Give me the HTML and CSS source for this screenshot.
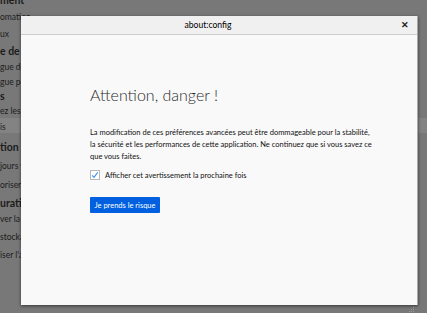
FILE: index.html
```html
<!DOCTYPE html>
<html lang="fr">
<head>
    <meta charset="UTF-8">
    <title>about:config</title>
    <link rel="stylesheet" href="styles.css">
</head>
<body>
    <div class="page-behind">
        <div class="row head r1">ment</div>
        <div class="row r2">omation</div>
        <div class="row r3">ux</div>
        <div class="row head r4">e de da</div>
        <div class="row r5">gue de</div>
        <div class="row r6">gue po</div>
        <div class="row head r7">s</div>
        <div class="row r8">ez les <span class="link">l</span></div>
        <div class="row selected r9">is</div>
        <div class="row head r10">tion s</div>
        <div class="row r11">jours v</div>
        <div class="row r12">oriser l</div>
        <div class="row head r13">uratio</div>
        <div class="row r14">ver la</div>
        <div class="row r15">stocka</div>
        <div class="row r16">iser l'a</div>
    </div>

    <div class="dialog">
        <div class="dialog-title">
            <span class="title-text">about:config</span>
            <span class="close-btn">&#x2715;</span>
        </div>
        <div class="dialog-body">
            <h1>Attention, danger !</h1>
            <p class="warning">La modification de ces préférences avancées peut être dommageable pour la stabilité, la sécurité et les performances de cette application. Ne continuez que si vous savez ce que vous faites.</p>
            <label class="check-row">
                <span class="checkbox">
                    <svg width="8" height="8" viewBox="0 0 8 8"><path d="M1.2 4.4 L3 6.4 L6.8 1.2" fill="none" stroke="#3b8fe6" stroke-width="1.1"/></svg>
                </span>
                Afficher cet avertissement la prochaine fois
            </label>
            <button class="accept-btn">Je prends le risque</button>
        </div>
        <div class="grip">
            <svg width="6" height="6" viewBox="0 0 6 6"><rect x="4" y="0" width="1" height="1" fill="#9a9a9a"/><rect x="2" y="2" width="1" height="1" fill="#9a9a9a"/><rect x="4" y="2" width="1" height="1" fill="#9a9a9a"/><rect x="0" y="4" width="1" height="1" fill="#9a9a9a"/><rect x="2" y="4" width="1" height="1" fill="#9a9a9a"/><rect x="4" y="4" width="1" height="1" fill="#9a9a9a"/></svg>
        </div>
    </div>
</body>
</html>
```

FILE: styles.css
```css
body {
    margin: 0;
    width: 427px;
    height: 313px;
    overflow: hidden;
    background-color: #787878;
    font-family: Lato, 'Open Sans', sans-serif;
    position: relative;
}

/* page derriere le voile */
.page-behind {
    display: flex;
    flex-direction: column;
    margin-top: -8px;
    color: #1c1c1c;
    font-size: 8.5px;
}

.row {
    display: flex;
    align-items: center;
    white-space: nowrap;
    overflow: hidden;
}

.head {
    font-size: 10.5px;
    font-weight: 700;
}

.link {
    color: #0a3a78;
}

.selected {
    background-color: #838383;
}

.r1 { height: 16px; }
.r2 { height: 17px; }
.r3 { height: 18px; }
.r4 { height: 16px; }
.r5 { height: 16px; }
.r6 { height: 13px; }
.r7 { height: 15px; }
.r8 { height: 15px; }
.r9 { height: 15px; padding-top: 3px; box-sizing: border-box; }
.r10 { height: 21px; margin-top: 3px; }
.r11 { height: 18px; }
.r12 { height: 20px; }
.r13 { height: 16px; }
.r14 { height: 16px; }
.r15 { height: 20px; }
.r16 { height: 16px; }

/* fenetre de dialogue */
.dialog {
    position: absolute;
    left: 21px;
    top: 16px;
    width: 397px;
    height: 289px;
    box-sizing: border-box;
    background-color: #f9f9f9;
    border-right: 1px solid #a8a8a8;
    box-shadow: 0 1px 3px rgba(0, 0, 0, 0.55);
    display: flex;
    flex-direction: column;
}

.dialog-title {
    height: 18px;
    flex-shrink: 0;
    background-color: #f0f0f0;
    border-bottom: 1px solid #cdcdcd;
    display: flex;
    align-items: center;
    justify-content: center;
    position: relative;
    font-size: 8.6px;
    color: #000;
}

.title-text {
    margin-left: -22px;
}

.close-btn {
    position: absolute;
    right: 8px;
    top: 3px;
    font-size: 9px;
    font-weight: 700;
    color: #222;
}

.dialog-body {
    padding: 48px 0 0 69px;
}

h1 {
    margin: 0;
    font-size: 16px;
    line-height: 24px;
    font-weight: 300;
    color: #2a2a2a;
}

.warning {
    margin: 20px 0 0 0;
    width: 287px;
    font-size: 7.5px;
    line-height: 12px;
    color: #111;
}

.check-row {
    margin-top: 6px;
    display: flex;
    align-items: center;
    height: 12px;
    font-size: 7.5px;
    color: #111;
}

.checkbox {
    width: 10px;
    height: 10px;
    box-sizing: border-box;
    border: 1px solid #b8b8b8;
    background-color: #fff;
    margin-right: 5px;
    display: flex;
    align-items: center;
    justify-content: center;
}

.accept-btn {
    margin-top: 16px;
    width: 70px;
    height: 16px;
    padding: 0;
    border: none;
    border-radius: 1px;
    background-color: #0060df;
    color: #fff;
    font-family: Lato, 'Open Sans', sans-serif;
    font-size: 7.5px;
    white-space: nowrap;
}

.grip {
    position: absolute;
    right: 2px;
    bottom: 2px;
    width: 6px;
    height: 6px;
}
```
